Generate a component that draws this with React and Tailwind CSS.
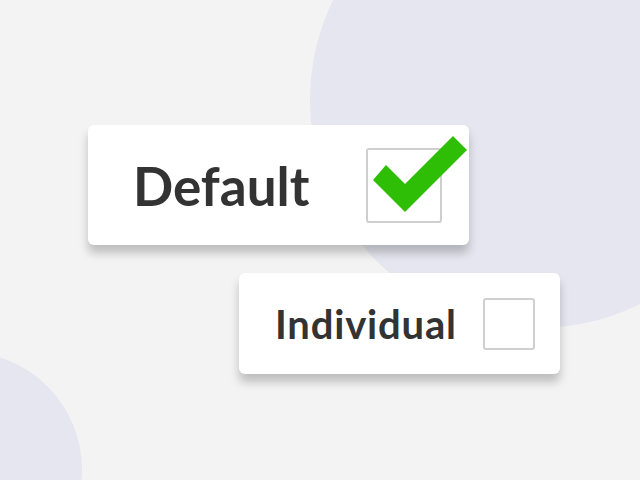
export default function App() {
  return (
    <div className="relative w-[640px] h-[480px] overflow-hidden bg-[#f3f3f3] font-['Lato',sans-serif]">
      {/* background blobs */}
      <div className="absolute left-[310px] top-[-128px] w-[456px] h-[456px] rounded-full bg-[#e6e6f0]" />
      <div className="absolute left-[-153px] top-[352px] w-[235px] h-[235px] rounded-full bg-[#e6e6f0]" />

      <div className="relative flex flex-col items-start pt-[125px]">
        <div className="ml-[88px] w-[381px] h-[120px] flex items-center justify-between pl-[45px] pr-[27px] bg-white rounded-[6px] shadow-[0_8px_10px_rgba(0,0,0,0.22)]">
          <span className="text-[53px] font-bold text-[#333333] leading-none">Default</span>
          <div className="relative w-[76px] h-[75px] border-2 border-[#cfcfcf] rounded-[3px]">
            <svg className="absolute left-[5px] top-[-14px]" width="94" height="76" viewBox="0 0 94 76">
              <polygon points="0,44 13,29 32,48 80,0 94,14 32,76" fill="#2ebe05" />
            </svg>
          </div>
        </div>

        <div className="mt-[28px] ml-[239px] w-[321px] h-[101px] flex items-center justify-between pl-[36px] pr-[25px] bg-white rounded-[6px] shadow-[0_8px_10px_rgba(0,0,0,0.22)]">
          <span className="text-[40px] font-bold tracking-[0.8px] text-[#333333] leading-none">Individual</span>
          <div className="w-[52px] h-[52px] border-2 border-[#cfcfcf] rounded-[3px]" />
        </div>
      </div>
    </div>
  );
}
